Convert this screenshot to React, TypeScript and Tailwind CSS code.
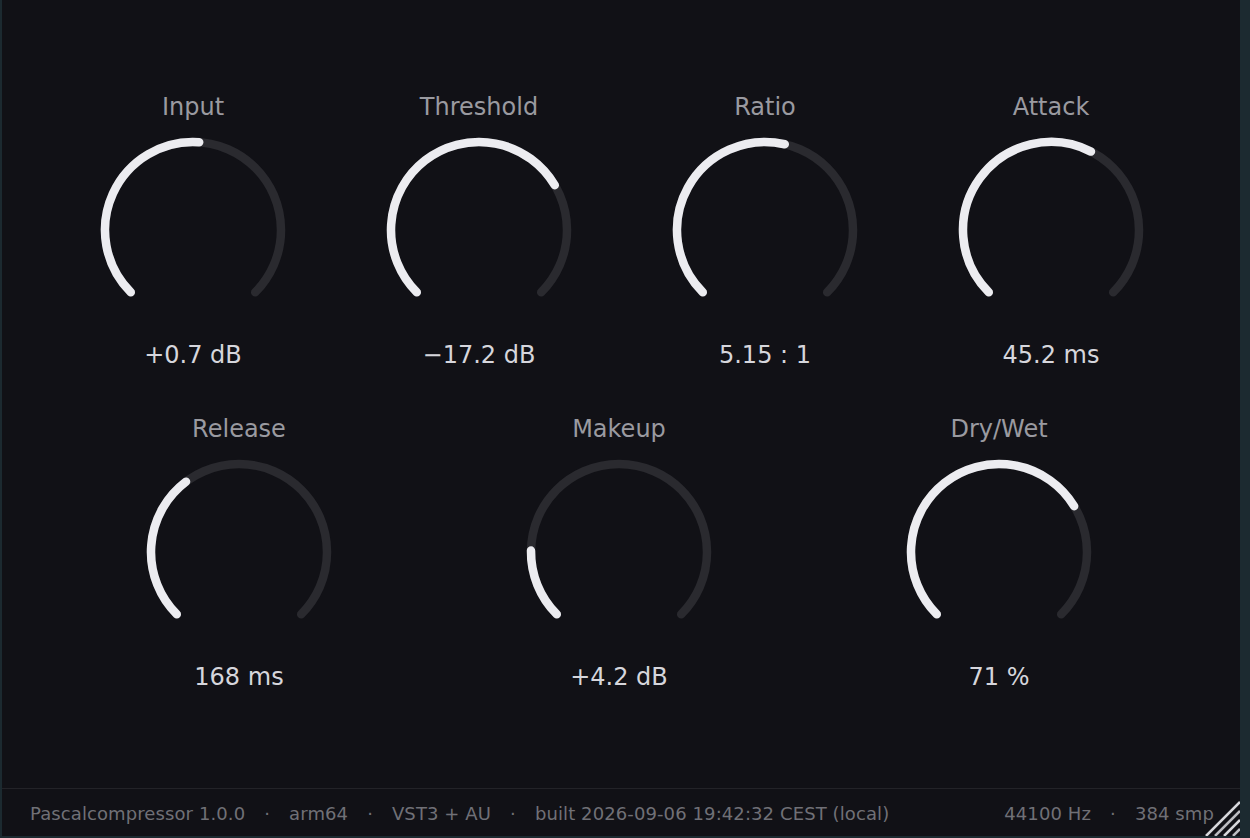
type Knob = { label: string; value: string; pos: number };

const topRow: Knob[] = [
  { label: "Input", value: "+0.7 dB", pos: 0.515 },
  { label: "Threshold", value: "−17.2 dB", pos: 0.72 },
  { label: "Ratio", value: "5.15 : 1", pos: 0.548 },
  { label: "Attack", value: "45.2 ms", pos: 0.6 },
];

const bottomRow: Knob[] = [
  { label: "Release", value: "168 ms", pos: 0.363 },
  { label: "Makeup", value: "+4.2 dB", pos: 0.17 },
  { label: "Dry/Wet", value: "71 %", pos: 0.717 },
];

const footerLeft = [
  "Pascalcompressor 1.0.0",
  "arm64",
  "VST3 + AU",
  "built 2026-09-06 19:42:32 CEST (local)",
];
const footerRight = ["44100 Hz", "384 smp"];

const SIZE = 190;
const C = SIZE / 2;
const R = 88;

function point(deg: number) {
  const a = (deg * Math.PI) / 180;
  return [C + R * Math.sin(a), C - R * Math.cos(a)];
}

function arc(from: number, to: number) {
  const [x1, y1] = point(from);
  const [x2, y2] = point(to);
  const large = to - from > 180 ? 1 : 0;
  return `M ${x1} ${y1} A ${R} ${R} 0 ${large} 1 ${x2} ${y2}`;
}

function Dial({ knob }: { knob: Knob }) {
  const end = -135 + knob.pos * 270;
  return (
    <div className="flex flex-col items-center">
      <div className="h-[28px] text-[24px] leading-[28px] text-[#9a9aa0]">
        {knob.label}
      </div>
      <svg width={SIZE} height={SIZE} className="mt-[14px]">
        <path
          d={arc(-135, 135)}
          fill="none"
          stroke="#2a2a2f"
          strokeWidth={8.5}
          strokeLinecap="round"
        />
        <path
          d={arc(-135, end)}
          fill="none"
          stroke="#ececf0"
          strokeWidth={8.5}
          strokeLinecap="round"
        />
      </svg>
      <div className="mt-[16px] h-[28px] text-[24px] leading-[28px] text-[#d6d6dc]">
        {knob.value}
      </div>
    </div>
  );
}

function FooterGroup({ items }: { items: string[] }) {
  return (
    <div className="flex items-center gap-[19px]">
      {items.map((item, i) => (
        <div key={item} className="flex items-center gap-[19px]">
          {i > 0 && <span>·</span>}
          <span>{item}</span>
        </div>
      ))}
    </div>
  );
}

export default function App() {
  return (
    <div
      className="flex h-[838px] w-[1250px] bg-[#1c2a30]"
      style={{ fontFamily: '"DejaVu Sans", Verdana, sans-serif' }}
    >
      <div className="ml-[2px] flex h-[836px] w-[1238px] flex-col bg-[#111116]">
        <div className="flex-1 pt-[93px]">
          <div className="grid grid-cols-4 pl-[48px] pr-[46px]">
            {topRow.map((k) => (
              <Dial key={k.label} knob={k} />
            ))}
          </div>
          <div className="mt-[46px] grid grid-cols-3 pl-[47px] pr-[51px]">
            {bottomRow.map((k) => (
              <Dial key={k.label} knob={k} />
            ))}
          </div>
        </div>

        <div className="relative flex h-[48px] items-center justify-between border-t border-[#232328] pl-[28px] pr-[26px] pt-[1px] text-[18px] tracking-[0.1px] text-[#707076]">
          <FooterGroup items={footerLeft} />
          <FooterGroup items={footerRight} />
          <svg
            width="36"
            height="36"
            viewBox="0 0 36 36"
            className="absolute bottom-0 right-0"
          >
            <line x1="2" y1="36" x2="36" y2="2" stroke="#d8d8dc" strokeWidth="2.5" />
            <line x1="11" y1="36" x2="36" y2="11" stroke="#bdbdc2" strokeWidth="2.5" />
            <line x1="20" y1="36" x2="36" y2="20" stroke="#d8d8dc" strokeWidth="2.5" />
            <line x1="29" y1="36" x2="36" y2="29" stroke="#bdbdc2" strokeWidth="2.5" />
          </svg>
        </div>
      </div>
    </div>
  );
}
